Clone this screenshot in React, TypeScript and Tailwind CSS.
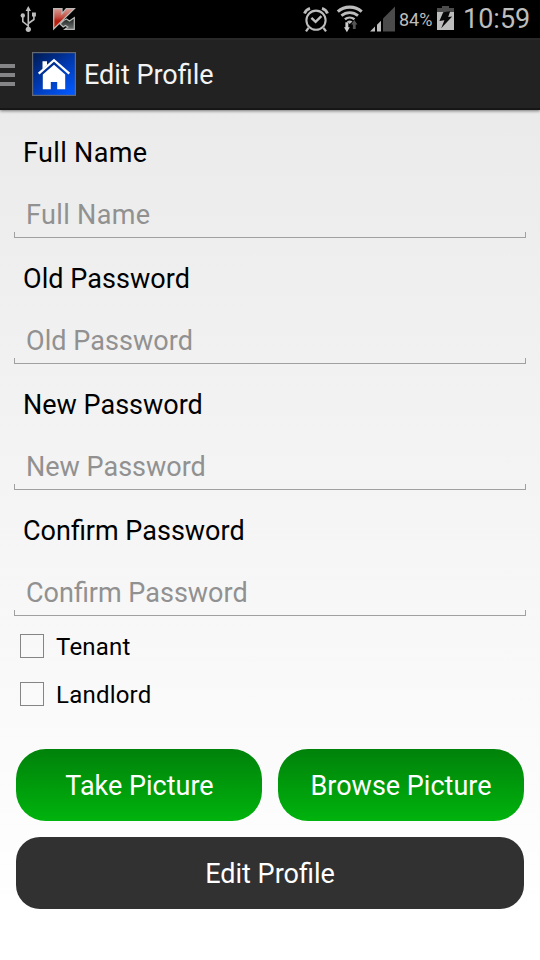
const fields = [
  { name: "Full Name", tracking: "tracking-[0.35px]" },
  { name: "Old Password", tracking: "tracking-[0.06px]" },
  { name: "New Password", tracking: "tracking-normal" },
  { name: "Confirm Password", tracking: "tracking-normal" },
];
const roles = ["Tenant", "Landlord"];

function UsbIcon() {
  return (
    <svg className="ml-5 h-[26px] w-4 shrink-0" viewBox="0 0 16 26" fill="none" stroke="#bdbdbd" strokeWidth="1.6">
      <path d="M8.3 3v21M8.3 20L2.8 15.5V9.5M8.3 17.5l5.6-4V8" />
      <path d="M8.3 0l2.7 5H5.6z" fill="#bdbdbd" stroke="none" />
      <circle cx="2.8" cy="9.4" r="2.2" fill="#bdbdbd" stroke="none" />
      <rect x="12" y="6.5" width="3.9" height="4" fill="#bdbdbd" stroke="none" />
      <circle cx="8.3" cy="23.3" r="2.6" fill="#bdbdbd" stroke="none" />
    </svg>
  );
}

function KasperskyIcon() {
  return (
    <svg className="ml-4 h-6 w-6 shrink-0" viewBox="0 0 24 24">
      <defs>
        <linearGradient id="kred" x1="0" y1="0" x2="0" y2="1">
          <stop offset="0" stopColor="#d59a93" />
          <stop offset=".4" stopColor="#c55448" />
          <stop offset=".6" stopColor="#b51c0d" />
          <stop offset="1" stopColor="#c92711" />
        </linearGradient>
        <linearGradient id="kgray" x1="0" y1="0" x2="0" y2="1">
          <stop offset="0" stopColor="#161a19" />
          <stop offset="1" stopColor="#737876" />
        </linearGradient>
      </defs>
      <path d="M11.5 13.5l3-1.5 3 2 4.8-3.3v11.6h-9.5l3-2.3-2.3-1.5-2.3 1.5-3.2-3z" fill="url(#kgray)" stroke="#b8b8b8" strokeWidth="1.2" />
      <path d="M1.7 1.7h8.3v5l4.3-5h8L1.7 22z" fill="url(#kred)" stroke="#bdb9b6" strokeWidth="1.3" />
    </svg>
  );
}

function AlarmIcon() {
  return (
    <svg className="h-[26px] w-[26px] shrink-0" viewBox="0 0 26 26" fill="none" stroke="#bdbdbd">
      <circle cx="13" cy="14.2" r="9.6" strokeWidth="2.1" />
      <path d="M8.4 11.8l4.2 4 5.8-5.7" strokeWidth="2.4" />
      <path d="M1.5 7.5C2.4 5 4.2 3.3 7 2.4M24.5 7.5c-.9-2.5-2.7-4.2-5.5-5.1" strokeWidth="2.8" />
      <path d="M5.5 21.8l-2.5 3.5M20.5 21.8l2.5 3.5" strokeWidth="2.3" />
    </svg>
  );
}

function WifiIcon() {
  return (
    <svg className="ml-[7px] h-[28px] w-[28px] shrink-0" viewBox="0 0 28 28" fill="none" stroke="#bdbdbd">
      <path d="M1.8 6.6C8.5.6 19 .6 25.7 6.6" strokeWidth="3.1" />
      <path d="M5.4 10.6c4.8-4.1 11.8-4.1 16.6 0" strokeWidth="2.7" />
      <path d="M8.9 14.3c2.8-2.3 6.8-2.3 9.6 0" strokeWidth="2.4" />
      <path d="M13.7 19l-2.8-2.6q2.8-1.9 5.6 0z" fill="#bdbdbd" stroke="none" />
      <path d="M9.4 17.3h2.9v5h1.5l-2.9 4.9L8 22.3h1.4z" fill="#cfcfcf" stroke="none" />
      <path d="M18.3 15l3.1 4.4h-1.7V24h-2.8v-4.6h-1.7z" fill="#555" stroke="none" />
    </svg>
  );
}

function SignalIcon() {
  return (
    <svg className="ml-[6px] h-[26px] w-[25px] shrink-0" viewBox="0 0 25 26">
      <path d="M0 25.5l5-5v5zM7 18.7l4-4v10.8H7z" fill="#bdbdbd" />
      <path d="M13 12.5L25 .5v25H13z" fill="#4b4b4b" />
    </svg>
  );
}

function BatteryIcon() {
  return (
    <svg className="mb-0.5 ml-[5px] h-6 w-[17px] shrink-0" viewBox="0 0 17 24">
      <path d="M5 0h7v2h5v5H0V2h5z" fill="#4d4d4d" />
      <path d="M0 6h17v18H0z" fill="#bdbdbd" />
      <path d="M6.2 6.3L13.2 5.3l-2 5.6 4-.4-11 11.7L7.4 14.2l-5 .9z" fill="#080808" />
    </svg>
  );
}

function HomeLogo() {
  return (
    <svg className="ml-[17px] h-11 w-11 shrink-0" viewBox="0 0 44 44">
      <defs>
        <linearGradient id="homeBlue" x1=".1" y1="0" x2=".85" y2="1">
          <stop offset="0" stopColor="#001c55" />
          <stop offset=".5" stopColor="#0039b0" />
          <stop offset="1" stopColor="#0058ff" />
        </linearGradient>
      </defs>
      <rect x=".6" y=".6" width="42.8" height="42.8" fill="url(#homeBlue)" stroke="#646973" strokeWidth="1.2" />
      <path d="M10.5 9.2H15v3.9l-4.5 4z" fill="#fff" />
      <path d="M6.7 21.7L22 8.2l15.3 13.5" fill="none" stroke="#fff" strokeWidth="2.3" />
      <path d="M10.8 22.6L22 12.8l11.2 9.8v14.6h-8V30h-6.4v7.2h-8z" fill="#fff" />
    </svg>
  );
}

export default function App() {
  return (
    <div className="flex h-[960px] w-[540px] flex-col overflow-hidden bg-linear-to-b from-[#e8e8e8] to-[#ffffff] to-95% font-['Roboto',sans-serif] text-[27px] leading-9 text-black">
      <div className="flex h-[38px] shrink-0 items-center bg-black text-[#bdbdbd]">
        <UsbIcon />
        <KasperskyIcon />
        <div className="ml-auto flex h-full items-center pr-[10px]">
          <AlarmIcon />
          <WifiIcon />
          <SignalIcon />
          <span className="ml-1 w-[33px] whitespace-nowrap pt-0.5 text-[18px]">84%</span>
          <BatteryIcon />
          <span className="ml-[9px] w-[67px] whitespace-nowrap text-[27px]">10:59</span>
        </div>
      </div>
      <header className="flex h-[72px] shrink-0 items-center border-y-2 border-t-[#292929] border-b-[#161616] bg-[#222222] text-[#f3f3f3] shadow-[0_1px_3px_rgba(0,0,0,0.5)]">
        <div className="flex w-[15px] flex-col gap-[5px] pt-0.5">
          <div className="h-1 bg-[#858588]" />
          <div className="h-1 bg-[#858588]" />
          <div className="h-1 bg-[#858588]" />
        </div>
        <HomeLogo />
        <h1 className="ml-2 pt-0.5">Edit Profile</h1>
      </header>
      <main className="flex flex-col px-[14px] pt-[25px]">
        {fields.map(({ name, tracking }) => (
          <label key={name} className={`flex h-[126px] flex-col ${tracking}`}>
            <span className="h-9 pl-[9px]">{name}</span>
            <input
              placeholder={name}
              className="mt-[26px] h-9 bg-transparent px-3 outline-none placeholder:text-[#919191] placeholder:opacity-100"
            />
            <span className="-mt-px h-[6px] border-x border-b border-[#a0a0a0]" />
          </label>
        ))}
        <div className="-mt-[17px] flex flex-col">
          {roles.map((role) => (
            <label key={role} className="flex h-12 items-center gap-3 pl-[6px] text-[24px] tracking-[0.22px]">
              <input type="checkbox" className="size-6 appearance-none border border-[#858585]" />
              <span className="pt-0.5">{role}</span>
            </label>
          ))}
        </div>
        <div className="mt-[31px] flex flex-col gap-4 px-0.5 text-white">
          <div className="grid grid-cols-2 gap-4">
            <button className="h-[72px] rounded-[30px] bg-linear-to-b from-[#00820a] to-[#00b30d] pl-px pt-0.5">Take Picture</button>
            <button className="h-[72px] rounded-[30px] bg-linear-to-b from-[#00820a] to-[#00b30d] pt-0.5">Browse Picture</button>
          </div>
          <button className="h-[72px] rounded-[24px] bg-[#313131] pt-0.5">Edit Profile</button>
        </div>
      </main>
    </div>
  );
}
